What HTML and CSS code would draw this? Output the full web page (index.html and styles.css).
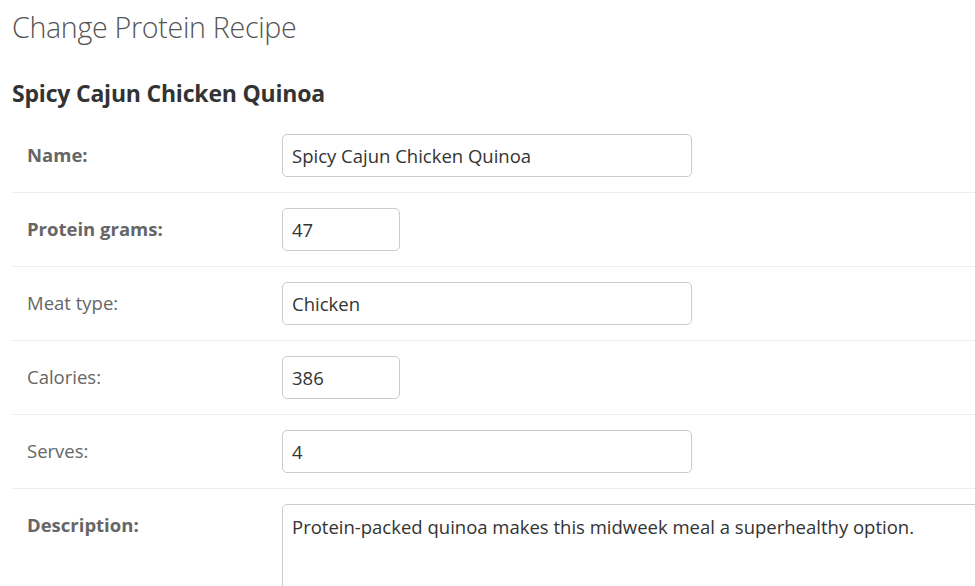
FILE: index.html
```html
<!DOCTYPE html>
<html>
<head>
<meta charset="utf-8">
<link rel="stylesheet" href="styles.css">
</head>
<body>
<div class="content">
  <h1 class="title">Change Protein Recipe</h1>
  <h2 class="subtitle">Spicy Cajun Chicken Quinoa</h2>
  <form class="form">
    <div class="row row-first">
      <label class="label required">Name:</label>
      <input class="input wide" type="text" value="Spicy Cajun Chicken Quinoa">
    </div>
    <div class="row">
      <label class="label required">Protein grams:</label>
      <input class="input narrow" type="text" value="47">
    </div>
    <div class="row">
      <label class="label">Meat type:</label>
      <input class="input wide" type="text" value="Chicken">
    </div>
    <div class="row">
      <label class="label">Calories:</label>
      <input class="input narrow" type="text" value="386">
    </div>
    <div class="row">
      <label class="label">Serves:</label>
      <input class="input wide" type="text" value="4">
    </div>
    <div class="row row-last">
      <label class="label required">Description:</label>
      <textarea class="input area">Protein-packed quinoa makes this midweek meal a superhealthy option.</textarea>
    </div>
  </form>
</div>
</body>
</html>
```
FILE: styles.css
```css
html, body {
  margin: 0;
  padding: 0;
  background: #fff;
}
body {
  font-family: "Open Sans", "Noto Sans", sans-serif;
  color: #333;
}
.content {
  padding: 0 0 0 12px;
  height: 586px;
  overflow: hidden;
}
.title {
  margin: 0;
  padding-top: 7px;
  font-size: 28.6px;
  font-weight: 300;
  color: #555;
  line-height: 40px;
  letter-spacing: -0.3px;
}
.subtitle {
  margin: 0;
  padding-top: 31px;
  font-size: 23px;
  font-weight: 700;
  line-height: 30px;
  color: #333;
  letter-spacing: -0.2px;
}
.form {
  margin-top: 10px;
}
.row {
  display: flex;
  align-items: flex-start;
  padding: 15px 0 15px 15px;
  border-top: 1px solid #eee;
  height: 43px;
  overflow: hidden;
}
.row-first {
  border-top-color: transparent;
}
.row-last {
  height: 100px;
  padding-bottom: 0;
}
.label {
  width: 240px;
  padding-right: 15px;
  padding-top: 9px;
  font-size: 18.5px;
  line-height: 24px;
  color: #666;
  flex: none;
}
.label.required {
  font-weight: 700;
}
.input {
  box-sizing: border-box;
  height: 43px;
  border: 1px solid #ccc;
  border-radius: 5px;
  padding: 0 9px;
  font-family: "Open Sans", "Noto Sans", sans-serif;
  font-size: 18.5px;
  color: #333;
  background: #fff;
  flex: none;
}
.wide { width: 410px; }
.narrow { width: 118px; }
.area {
  width: 915px;
  height: 140px;
  padding: 9px 9px;
  line-height: 26px;
  resize: none;
}
```
